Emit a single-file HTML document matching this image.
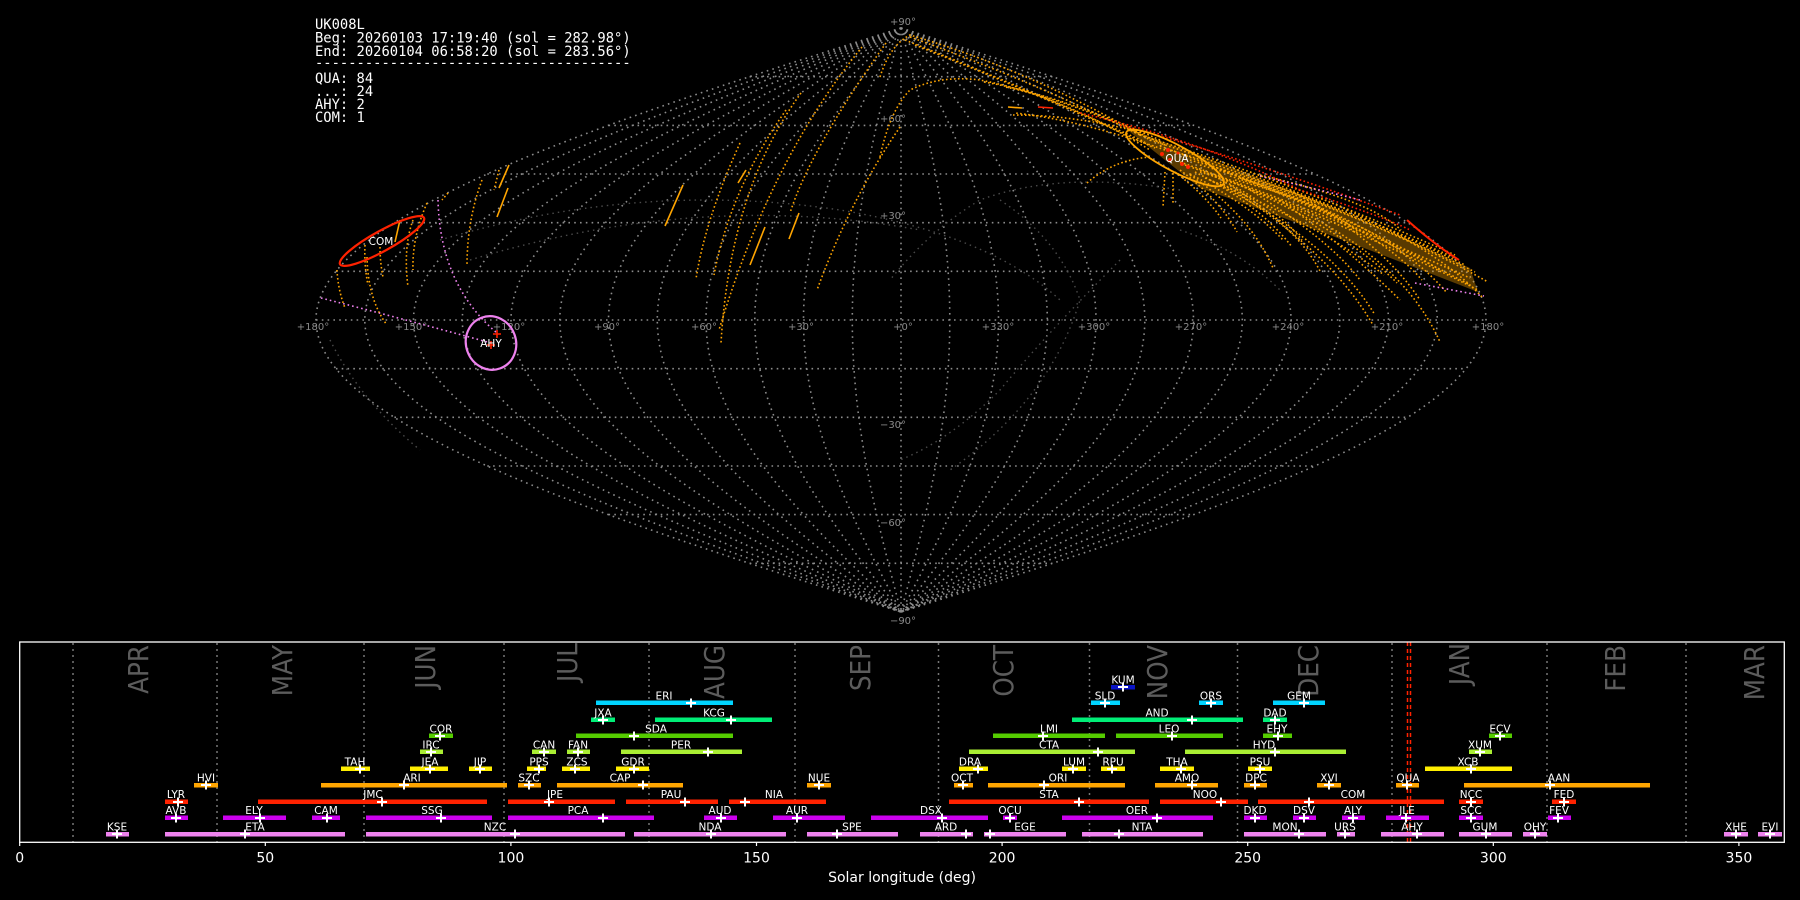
<!DOCTYPE html>
<html><head><meta charset="utf-8"><style>
html,body{margin:0;padding:0;background:#000;width:1800px;height:900px;overflow:hidden}
svg{display:block}
.g{fill:none;stroke:#8c8c8c;stroke-width:1.6;stroke-dasharray:1.6 4.2}
.gd{fill:none;stroke:#4a4a4a;stroke-width:1.4;stroke-dasharray:1.5 4}
.o{fill:none;stroke:#ffa500;stroke-width:1.6;stroke-dasharray:1.6 2.4}
.os{fill:none;stroke:#ffa500;stroke-width:1.6}
.r{fill:none;stroke:#ff2200;stroke-width:1.6;stroke-dasharray:1.6 2.4}
.v{fill:none;stroke:#ee82ee;stroke-width:1.6;stroke-dasharray:1.6 3}
.ll{font-family:"DejaVu Sans","Liberation Sans",sans-serif;font-size:10px;fill:#8a8a8a}
.bl{font-family:"DejaVu Sans","Liberation Sans",sans-serif;font-size:10.5px;fill:#fff;text-anchor:middle}
.mo{font-family:"DejaVu Sans","Liberation Sans",sans-serif;font-size:28px;fill:#5c5c5c;text-anchor:end}
.tk{font-family:"DejaVu Sans","Liberation Sans",sans-serif;font-size:14px;fill:#fff;text-anchor:middle}
.mono{font-family:"DejaVu Sans Mono","Liberation Mono",monospace;font-size:13.8px;fill:#fff}
</style></head><body>
<svg width="1800" height="900" viewBox="0 0 1800 900" xmlns="http://www.w3.org/2000/svg">
<!-- graticule meridians -->
<g class="g">
<path d="M901,28 L901,612"/>
<path d="M901,28 C876,123.2 852.3,214.3 852.3,320 C852.3,425.7 876,516.8 901,612"/>
<path d="M901,28 C851.1,123.2 803.5,214.3 803.5,320 C803.5,425.7 851.1,516.8 901,612"/>
<path d="M901,28 C826.1,123.2 754.8,214.3 754.8,320 C754.8,425.7 826.1,516.8 901,612"/>
<path d="M901,28 C801.1,123.2 706,214.3 706,320 C706,425.7 801.1,516.8 901,612"/>
<path d="M901,28 C776.1,123.2 657.3,214.3 657.3,320 C657.3,425.7 776.1,516.8 901,612"/>
<path d="M901,28 C751.2,123.2 608.5,214.3 608.5,320 C608.5,425.7 751.2,516.8 901,612"/>
<path d="M901,28 C726.2,123.2 559.8,214.3 559.8,320 C559.8,425.7 726.2,516.8 901,612"/>
<path d="M901,28 C701.2,123.2 511,214.3 511,320 C511,425.7 701.2,516.8 901,612"/>
<path d="M901,28 C676.2,123.2 462.3,214.3 462.3,320 C462.3,425.7 676.2,516.8 901,612"/>
<path d="M901,28 C651.3,123.2 413.5,214.3 413.5,320 C413.5,425.7 651.3,516.8 901,612"/>
<path d="M901,28 C626.3,123.2 364.8,214.3 364.8,320 C364.8,425.7 626.3,516.8 901,612"/>
<path d="M901,28 C601.3,123.2 316,214.3 316,320 C316,425.7 601.3,516.8 901,612"/>
<path d="M901,28 C926,123.2 949.8,214.3 949.8,320 C949.8,425.7 926,516.8 901,612"/>
<path d="M901,28 C950.9,123.2 998.5,214.3 998.5,320 C998.5,425.7 950.9,516.8 901,612"/>
<path d="M901,28 C975.9,123.2 1047.3,214.3 1047.3,320 C1047.3,425.7 975.9,516.8 901,612"/>
<path d="M901,28 C1000.9,123.2 1096,214.3 1096,320 C1096,425.7 1000.9,516.8 901,612"/>
<path d="M901,28 C1025.9,123.2 1144.8,214.3 1144.8,320 C1144.8,425.7 1025.9,516.8 901,612"/>
<path d="M901,28 C1050.8,123.2 1193.5,214.3 1193.5,320 C1193.5,425.7 1050.8,516.8 901,612"/>
<path d="M901,28 C1075.8,123.2 1242.3,214.3 1242.3,320 C1242.3,425.7 1075.8,516.8 901,612"/>
<path d="M901,28 C1100.8,123.2 1291,214.3 1291,320 C1291,425.7 1100.8,516.8 901,612"/>
<path d="M901,28 C1125.8,123.2 1339.8,214.3 1339.8,320 C1339.8,425.7 1125.8,516.8 901,612"/>
<path d="M901,28 C1150.7,123.2 1388.5,214.3 1388.5,320 C1388.5,425.7 1150.7,516.8 901,612"/>
<path d="M901,28 C1175.7,123.2 1437.3,214.3 1437.3,320 C1437.3,425.7 1175.7,516.8 901,612"/>
<path d="M901,28 C1200.7,123.2 1486,214.3 1486,320 C1486,425.7 1200.7,516.8 901,612"/>
<!-- parallels -->
<path d="M749.6,76.7H1052.4M608.5,125.4H1193.5M487.3,174H1314.7M394.4,222.7H1407.6M335.9,271.3H1466.1M316,320H1486M335.9,368.7H1466.1M394.4,417.3H1407.6M487.3,466H1314.7M608.5,514.6H1193.5M749.6,563.3H1052.4"/>
</g>
<!-- dim secondary graticule -->
<g class="gd">
<path d="M440,240 Q640,180 840,210 Q990,235 1060,300"/>
<path d="M470,260 Q700,190 920,230"/>
<path d="M1180,190 Q1060,170 980,200 Q930,230 890,280"/>
<path d="M1000,200 Q1060,240 1080,300 Q1050,400 950,470"/>
<path d="M1120,260 Q1050,330 1000,390 Q950,440 900,460"/>
<path d="M1180,230 Q1240,250 1280,290"/>
<path d="M330,340 Q360,400 420,450"/>
</g>
<!-- lat/lon labels -->
<g class="ll" text-anchor="middle">
<text x="903" y="25">+90°</text>
<text x="893" y="122">+60°</text>
<text x="893" y="219">+30°</text>
<text x="893" y="428">−30°</text>
<text x="893" y="526">−60°</text>
<text x="903" y="624">−90°</text>
<text x="313" y="330">+180°</text>
<text x="411" y="330">+150°</text>
<text x="509" y="330">+120°</text>
<text x="607" y="330">+90°</text>
<text x="704" y="330">+60°</text>
<text x="801" y="330">+30°</text>
<text x="903" y="330">+0°</text>
<text x="998" y="330">+330°</text>
<text x="1094" y="330">+300°</text>
<text x="1191" y="330">+270°</text>
<text x="1288" y="330">+240°</text>
<text x="1387" y="330">+210°</text>
<text x="1488" y="330">+180°</text>
</g>
<!-- trails left & middle -->
<g class="o">
<path d="M337,270 Q338,290 345,308"/>
<path d="M365,245 Q364,265 368,285"/>
<path d="M380,247 Q380,262 383,277"/>
<path d="M413,220 Q403,247 408,287"/>
<path d="M427,203 Q412,237 413,270"/>
<path d="M367,257 Q368,300 387,325"/>
<path d="M448,193 L442,200"/>
<path d="M482,180 Q467,220 467,266"/>
<path d="M499,170 L494,190"/>
<path d="M740,143 Q705,220 696,279"/>
<path d="M786,110 Q730,190 714,275"/>
<path d="M801,93 Q730,190 721,343"/>
<path d="M862,47 Q770,160 719,330"/>
<path d="M886,43 Q810,150 790,213"/>
<path d="M900,127 Q850,200 817,290"/>
<path d="M880,157 Q890,110 910,90 Q940,75 980,80 Q1060,95 1150,150"/>
<path d="M880,77 Q890,45 910,35 Q1030,70 1150,140"/>
<path d="M910,37 Q1030,80 1140,135"/>
<path d="M905,40 Q1030,90 1145,142"/>
<path d="M915,45 Q1040,95 1155,148"/>
<path d="M1013,115 Q1080,115 1150,135"/>
<path d="M1087,183 Q1113,160 1150,157"/>
<path d="M1165,172 L1163,207"/>
<path d="M1173,173 L1173,205"/>
</g>
<g class="os">
<path d="M400,220 L395,242"/>
<path d="M509,165 L499,188"/>
<path d="M508,188 L497,217"/>
<path d="M683,185 L665,226"/>
<path d="M765,227 L750,265"/>
<path d="M799,213 L789,239"/>
<path d="M746,170 L738,183"/>
<path d="M1008,107 L1022,108"/>
</g>
<!-- QUA dense band -->
<path d="M1125,128 Q1300,190 1470,268 L1478,292 Q1320,230 1200,188 Z" fill="#ffa500" opacity="0.35"/>
<g class="o">
<path d="M1180,162 Q1330,215 1470,278"/>
<path d="M1190,160 Q1330,200 1459,260"/>
<path d="M1200,172 Q1390,230 1440,342"/>
<path d="M1210,180 Q1330,240 1375,315"/>
<path d="M1220,182 Q1330,250 1373,325"/>
<path d="M1215,175 Q1340,225 1397,283"/>
<path d="M1205,178 Q1320,225 1384,275"/>
<path d="M1230,176 Q1370,220 1422,280"/>
<path d="M1240,178 Q1390,225 1447,293"/>
<path d="M1250,172 Q1420,230 1482,297"/>
<path d="M1190,175 Q1250,215 1273,268"/>
<path d="M1200,170 Q1270,200 1302,240"/>
<path d="M1195,172 Q1260,205 1292,247"/>
<path d="M1190,174 Q1250,205 1283,240"/>
<path d="M1180,170 Q1220,200 1237,232"/>
<path d="M1175,172 Q1205,195 1221,218"/>
<path d="M1230,185 Q1300,230 1321,273"/>
<path d="M1260,175 Q1370,200 1401,230"/>
<path d="M1235,180 Q1330,205 1359,233"/>
<path d="M1170,150 Q1330,200 1475,272"/>
<path d="M1150,140 Q1320,195 1465,265"/>
<path d="M1160,146 Q1320,205 1470,285"/>
<path d="M1185,165 Q1340,220 1478,290"/>
<path d="M1140,135 Q1300,185 1455,255"/>
<path d="M1200,165 Q1360,210 1488,282"/>
<path d="M1220,170 Q1360,220 1440,270"/>
<path d="M1250,190 Q1330,240 1360,280"/>
<path d="M1280,200 Q1350,250 1400,300"/>
<path d="M1290,190 Q1380,240 1420,300"/>
<path d="M1165,150 Q1080,120 1015,113"/>
<path d="M1160,140 Q1060,95 984,82"/>
<path d="M1165,145 Q1070,100 1005,87"/>
</g>
<g class="r">
<path d="M1080,113 Q1200,140 1300,190 Q1380,215 1410,230"/>
<path d="M1120,125 Q1250,160 1400,215"/>
</g>
<path d="M1407,220 Q1435,245 1459,260" fill="none" stroke="#ff2200" stroke-width="2"/>
<path d="M1038,107 L1053,108" fill="none" stroke="#ff2200" stroke-width="1.6"/>
<path d="M1260,176 Q1300,185 1360,200" class="v"/>
<path d="M1415,283 L1484,296" class="v"/>
<g fill="#ff2200">
<circle cx="1162" cy="154" r="2"/><circle cx="1168" cy="150" r="2"/><circle cx="1170" cy="160" r="2"/>
<circle cx="1182" cy="164" r="2"/><circle cx="1188" cy="167" r="2"/><circle cx="1178" cy="153" r="1.5"/>
</g>
<ellipse cx="1175" cy="158" rx="55" ry="13" transform="rotate(28 1175 158)" fill="none" stroke="#ffa500" stroke-width="1.8"/>
<text x="1177" y="162" class="bl" font-size="11">QUA</text>
<!-- COM & AHY -->
<path d="M321,298 Q400,318 491,343" class="v"/>
<path d="M438,200 Q440,285 497,333" class="v"/>
<ellipse cx="382" cy="241" rx="48" ry="10" transform="rotate(-29 382 241)" fill="none" stroke="#ff2200" stroke-width="2.2"/>
<text x="381" y="245" class="bl" font-size="11">COM</text>
<ellipse cx="491" cy="343" rx="25" ry="27" transform="rotate(-20 491 343)" fill="none" stroke="#ee82ee" stroke-width="2.2"/>
<path d="M493,334h8M497,330v8M487,345h8M491,341v8" stroke="#ff2200" stroke-width="1.6"/>
<text x="491" y="347" class="bl" font-size="11">AHY</text>
<!-- info text -->
<g class="mono">
<text x="315" y="29">UK008L</text>
<text x="315" y="42.5">Beg: 20260103 17:19:40 (sol = 282.98°)</text>
<text x="315" y="56">End: 20260104 06:58:20 (sol = 283.56°)</text>
<text x="315" y="67.5">--------------------------------------</text>
<text x="315" y="83">QUA: 84</text>
<text x="315" y="96">...: 24</text>
<text x="315" y="109">AHY: 2</text>
<text x="315" y="122">COM: 1</text>
</g>

<!-- ========== bottom chart ========== -->
<g stroke="#777" stroke-width="1.5" stroke-dasharray="2 4">
<path d="M73,643V842M217,643V842M364,643V842M504,643V842M649,643V842M795,643V842M938.5,643V842M1089.5,643V842M1237.5,643V842M1392,643V842M1547,643V842M1686,643V842"/>
</g>
<g class="mo">
<text transform="translate(148,645) rotate(-90) scale(0.88,1)">APR</text>
<text transform="translate(292,645) rotate(-90) scale(0.88,1)">MAY</text>
<text transform="translate(435,645) rotate(-90) scale(0.88,1)">JUN</text>
<text transform="translate(577,643) rotate(-90) scale(0.88,1)">JUL</text>
<text transform="translate(724,645) rotate(-90) scale(0.88,1)">AUG</text>
<text transform="translate(870,645) rotate(-90) scale(0.88,1)">SEP</text>
<text transform="translate(1013,645) rotate(-90) scale(0.88,1)">OCT</text>
<text transform="translate(1167,645) rotate(-90) scale(0.88,1)">NOV</text>
<text transform="translate(1318,645) rotate(-90) scale(0.88,1)">DEC</text>
<text transform="translate(1469,643) rotate(-90) scale(0.88,1)">JAN</text>
<text transform="translate(1625,645) rotate(-90) scale(0.88,1)">FEB</text>
<text transform="translate(1764,645) rotate(-90) scale(0.88,1)">MAR</text>
</g>
<g stroke="#ff2200" stroke-width="1.5" stroke-dasharray="4 3">
<path d="M1407.5,642V842M1410.5,642V842"/>
</g>
<!-- bars -->
<g>
<!-- row KUM 687 -->
<rect x="1111" y="685" width="24" height="4.5" fill="#0a14c8"/>
<!-- row 703 cyan -->
<g fill="#00d4ff">
<rect x="596" y="700.5" width="137" height="4.5"/><rect x="1091" y="700.5" width="29" height="4.5"/><rect x="1199" y="700.5" width="24" height="4.5"/><rect x="1273" y="700.5" width="52" height="4.5"/>
</g>
<g fill="#00ee77">
<rect x="591" y="717.5" width="24" height="4.5"/><rect x="655" y="717.5" width="117" height="4.5"/><rect x="1072" y="717.5" width="171" height="4.5"/><rect x="1263" y="717.5" width="24" height="4.5"/>
</g>
<g fill="#55cc00">
<rect x="429" y="733.5" width="24" height="4.5"/><rect x="576" y="733.5" width="157" height="4.5"/><rect x="993" y="733.5" width="112" height="4.5"/><rect x="1116" y="733.5" width="107" height="4.5"/><rect x="1263" y="733.5" width="29" height="4.5"/><rect x="1489" y="733.5" width="23" height="4.5"/>
</g>
<g fill="#aaee33">
<rect x="420" y="749.5" width="23" height="4.5"/><rect x="532" y="749.5" width="24" height="4.5"/><rect x="567" y="749.5" width="23" height="4.5"/><rect x="621" y="749.5" width="121" height="4.5"/><rect x="969" y="749.5" width="166" height="4.5"/><rect x="1185" y="749.5" width="161" height="4.5"/><rect x="1469" y="749.5" width="23" height="4.5"/>
</g>
<g fill="#ffee00">
<rect x="341" y="766.5" width="29" height="4.5"/><rect x="410" y="766.5" width="38" height="4.5"/><rect x="469" y="766.5" width="23" height="4.5"/><rect x="527" y="766.5" width="19" height="4.5"/><rect x="562" y="766.5" width="28" height="4.5"/><rect x="616" y="766.5" width="33" height="4.5"/><rect x="959" y="766.5" width="29" height="4.5"/><rect x="1062" y="766.5" width="24" height="4.5"/><rect x="1101" y="766.5" width="24" height="4.5"/><rect x="1160" y="766.5" width="34" height="4.5"/><rect x="1248" y="766.5" width="24" height="4.5"/><rect x="1425" y="766.5" width="87" height="4.5"/>
</g>
<g fill="#ffa500">
<rect x="194" y="783" width="24" height="4.5"/><rect x="321" y="783" width="186" height="4.5"/><rect x="518" y="783" width="23" height="4.5"/><rect x="557" y="783" width="126" height="4.5"/><rect x="807" y="783" width="24" height="4.5"/><rect x="954" y="783" width="19" height="4.5"/><rect x="988" y="783" width="137" height="4.5"/><rect x="1155" y="783" width="63" height="4.5"/><rect x="1244" y="783" width="23" height="4.5"/><rect x="1317" y="783" width="24" height="4.5"/><rect x="1396" y="783" width="23" height="4.5"/><rect x="1464" y="783" width="186" height="4.5"/>
</g>
<g fill="#ff2200">
<rect x="165" y="799.5" width="23" height="4.5"/><rect x="258" y="799.5" width="229" height="4.5"/><rect x="508" y="799.5" width="107" height="4.5"/><rect x="626" y="799.5" width="92" height="4.5"/><rect x="729" y="799.5" width="97" height="4.5"/><rect x="949" y="799.5" width="200" height="4.5"/><rect x="1160" y="799.5" width="88" height="4.5"/><rect x="1258" y="799.5" width="186" height="4.5"/><rect x="1459" y="799.5" width="24" height="4.5"/><rect x="1552" y="799.5" width="24" height="4.5"/>
</g>
<g fill="#cc00ee">
<rect x="165" y="815.5" width="23" height="4.5"/><rect x="223" y="815.5" width="63" height="4.5"/><rect x="312" y="815.5" width="28" height="4.5"/><rect x="366" y="815.5" width="126" height="4.5"/><rect x="508" y="815.5" width="146" height="4.5"/><rect x="704" y="815.5" width="33" height="4.5"/><rect x="773" y="815.5" width="72" height="4.5"/><rect x="871" y="815.5" width="117" height="4.5"/><rect x="1003" y="815.5" width="14" height="4.5"/><rect x="1062" y="815.5" width="151" height="4.5"/><rect x="1244" y="815.5" width="23" height="4.5"/><rect x="1293" y="815.5" width="23" height="4.5"/><rect x="1342" y="815.5" width="23" height="4.5"/><rect x="1386" y="815.5" width="43" height="4.5"/><rect x="1459" y="815.5" width="24" height="4.5"/><rect x="1548" y="815.5" width="23" height="4.5"/>
</g>
<g fill="#ee82ee">
<rect x="106" y="832" width="23" height="4.5"/><rect x="165" y="832" width="180" height="4.5"/><rect x="366" y="832" width="259" height="4.5"/><rect x="634" y="832" width="152" height="4.5"/><rect x="807" y="832" width="91" height="4.5"/><rect x="920" y="832" width="53" height="4.5"/><rect x="984" y="832" width="82" height="4.5"/><rect x="1082" y="832" width="121" height="4.5"/><rect x="1244" y="832" width="82" height="4.5"/><rect x="1337" y="832" width="18" height="4.5"/><rect x="1381" y="832" width="63" height="4.5"/><rect x="1459" y="832" width="53" height="4.5"/><rect x="1523" y="832" width="24" height="4.5"/><rect x="1724" y="832" width="24" height="4.5"/><rect x="1758" y="832" width="24" height="4.5"/>
</g>
</g>
<!-- crosses -->
<g stroke="#fff" stroke-width="2" fill="none">
<path d="M1118,687h10M1123,682.5v9"/>
<path d="M686,703h10M691,698.5v9M1100,703h10M1105,698.5v9M1206,703h10M1211,698.5v9M1299,703h10M1304,698.5v9"/>
<path d="M598,720h10M603,715.5v9M726,720h10M731,715.5v9M1187,720h10M1192,715.5v9M1270,720h10M1275,715.5v9"/>
<path d="M435,736h10M440,731.5v9M629,736h10M634,731.5v9M1038,736h10M1043,731.5v9M1167,736h10M1172,731.5v9M1273,736h10M1278,731.5v9M1495,736h10M1500,731.5v9"/>
<path d="M426,752h10M431,747.5v9M539,752h10M544,747.5v9M573,752h10M578,747.5v9M703,752h10M708,747.5v9M1093,752h10M1098,747.5v9M1270,752h10M1275,747.5v9M1475,752h10M1480,747.5v9"/>
<path d="M355,769h10M360,764.5v9M425,769h10M430,764.5v9M475,769h10M480,764.5v9M534,769h10M539,764.5v9M570,769h10M575,764.5v9M629,769h10M634,764.5v9M973,769h10M978,764.5v9M1068,769h10M1073,764.5v9M1107,769h10M1112,764.5v9M1176,769h10M1181,764.5v9M1255,769h10M1260,764.5v9M1466,769h10M1471,764.5v9"/>
<path d="M201,785h10M206,780.5v9M399,785h10M404,780.5v9M524,785h10M529,780.5v9M638,785h10M643,780.5v9M814,785h10M819,780.5v9M958,785h10M963,780.5v9M1039,785h10M1044,780.5v9M1187,785h10M1192,780.5v9M1250,785h10M1255,780.5v9M1324,785h10M1329,780.5v9M1402,785h10M1407,780.5v9M1545,785h10M1550,780.5v9"/>
<path d="M173,802h10M178,797.5v9M377,802h10M382,797.5v9M544,802h10M549,797.5v9M680,802h10M685,797.5v9M740,802h10M745,797.5v9M1074,802h10M1079,797.5v9M1216,802h10M1221,797.5v9M1304,802h10M1309,797.5v9M1466,802h10M1471,797.5v9M1559,802h10M1564,797.5v9"/>
<path d="M171,818h10M176,813.5v9M255,818h10M260,813.5v9M322,818h10M327,813.5v9M436,818h10M441,813.5v9M598,818h10M603,813.5v9M716,818h10M721,813.5v9M792,818h10M797,813.5v9M937,818h10M942,813.5v9M1005,818h10M1010,813.5v9M1152,818h10M1157,813.5v9M1250,818h10M1255,813.5v9M1299,818h10M1304,813.5v9M1348,818h10M1353,813.5v9M1401,818h10M1406,813.5v9M1466,818h10M1471,813.5v9M1553,818h10M1558,813.5v9"/>
<path d="M112,834h10M117,829.5v9M240,834h10M245,829.5v9M510,834h10M515,829.5v9M706,834h10M711,829.5v9M832,834h10M837,829.5v9M961,834h10M966,829.5v9M985,834h10M990,829.5v9M1114,834h10M1119,829.5v9M1294,834h10M1299,829.5v9M1340,834h10M1345,829.5v9M1412,834h10M1417,829.5v9M1481,834h10M1486,829.5v9M1530,834h10M1535,829.5v9M1731,834h10M1736,829.5v9M1765,834h10M1770,829.5v9"/>
</g>
<!-- bar labels -->
<g class="bl">
<text x="1123" y="683.5">KUM</text>
<text x="664" y="699.5">ERI</text><text x="1105" y="699.5">SLD</text><text x="1211" y="699.5">ORS</text><text x="1299" y="699.5">GEM</text>
<text x="603" y="716.5">JXA</text><text x="714" y="716.5">KCG</text><text x="1157" y="716.5">AND</text><text x="1275" y="716.5">DAD</text>
<text x="441" y="732.5">COR</text><text x="656" y="732.5">SDA</text><text x="1049" y="732.5">LMI</text><text x="1169" y="732.5">LEO</text><text x="1277" y="732.5">EHY</text><text x="1500" y="732.5">ECV</text>
<text x="431" y="748.5">IRC</text><text x="544" y="748.5">CAN</text><text x="578" y="748.5">FAN</text><text x="681" y="748.5">PER</text><text x="1049" y="748.5">CTA</text><text x="1264" y="748.5">HYD</text><text x="1480" y="748.5">XUM</text>
<text x="355" y="765.5">TAH</text><text x="430" y="765.5">JEA</text><text x="480" y="765.5">JIP</text><text x="539" y="765.5">PPS</text><text x="577" y="765.5">ZCS</text><text x="633" y="765.5">GDR</text><text x="970" y="765.5">DRA</text><text x="1074" y="765.5">LUM</text><text x="1113" y="765.5">RPU</text><text x="1177" y="765.5">THA</text><text x="1260" y="765.5">PSU</text><text x="1468" y="765.5">XCB</text>
<text x="206" y="781.5">HVI</text><text x="412" y="781.5">ARI</text><text x="529" y="781.5">SZC</text><text x="620" y="781.5">CAP</text><text x="819" y="781.5">NUE</text><text x="962" y="781.5">OCT</text><text x="1058" y="781.5">ORI</text><text x="1187" y="781.5">AMO</text><text x="1256" y="781.5">DPC</text><text x="1329" y="781.5">XVI</text><text x="1408" y="781.5">QUA</text><text x="1559" y="781.5">AAN</text>
<text x="176" y="798">LYR</text><text x="373" y="798">JMC</text><text x="555" y="798">JPE</text><text x="671" y="798">PAU</text><text x="774" y="798">NIA</text><text x="1049" y="798">STA</text><text x="1205" y="798">NOO</text><text x="1353" y="798">COM</text><text x="1471" y="798">NCC</text><text x="1564" y="798">FED</text>
<text x="176" y="814">AVB</text><text x="254" y="814">ELY</text><text x="326" y="814">CAM</text><text x="432" y="814">SSG</text><text x="578" y="814">PCA</text><text x="720" y="814">AUD</text><text x="797" y="814">AUR</text><text x="931" y="814">DSX</text><text x="1010" y="814">OCU</text><text x="1137" y="814">OER</text><text x="1255" y="814">DKD</text><text x="1304" y="814">DSV</text><text x="1353" y="814">ALY</text><text x="1407" y="814">JLE</text><text x="1471" y="814">SCC</text><text x="1559" y="814">FEV</text>
<text x="117" y="830.5">KSE</text><text x="255" y="830.5">ETA</text><text x="495" y="830.5">NZC</text><text x="710" y="830.5">NDA</text><text x="852" y="830.5">SPE</text><text x="946" y="830.5">ARD</text><text x="1025" y="830.5">EGE</text><text x="1142" y="830.5">NTA</text><text x="1285" y="830.5">MON</text><text x="1345" y="830.5">URS</text><text x="1412" y="830.5">AHY</text><text x="1485" y="830.5">GUM</text><text x="1535" y="830.5">OHY</text><text x="1736" y="830.5">XHE</text><text x="1770" y="830.5">EVI</text>
</g>
<!-- axes box -->
<rect x="19.7" y="642" width="1764.6" height="200.3" fill="none" stroke="#fff" stroke-width="1.3"/>
<g stroke="#fff" stroke-width="1.2">
<path d="M19.7,842v4M265.3,842v4M510.9,842v4M756.5,842v4M1002.1,842v4M1247.7,842v4M1493.3,842v4M1738.9,842v4"/>
</g>
<g class="tk">
<text x="19.7" y="862.5">0</text><text x="265.3" y="862.5">50</text><text x="510.9" y="862.5">100</text><text x="756.5" y="862.5">150</text><text x="1002.1" y="862.5">200</text><text x="1247.7" y="862.5">250</text><text x="1493.3" y="862.5">300</text><text x="1738.9" y="862.5">350</text>
<text x="902" y="882">Solar longitude (deg)</text>
</g>
</svg>
</body></html>
